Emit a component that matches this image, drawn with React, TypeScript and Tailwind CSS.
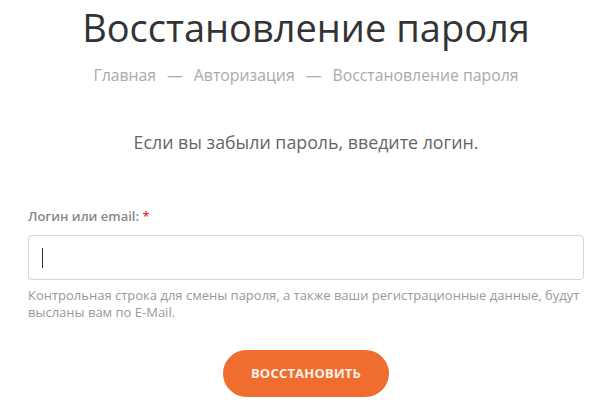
import React from 'react';

export default function App() {
  return (
    <div className="w-[600px] h-[409px] bg-white overflow-hidden font-['Open_Sans',sans-serif]">
      <div className="pl-[28px] pr-[16px]">
        <h1 className="text-center text-[38px] leading-[52px] text-[#333] font-normal pt-[1px]">
          Восстановление пароля
        </h1>
        <div className="mt-[12px] flex justify-center gap-[11px] text-[15.8px] leading-[20px] text-[#aaa]">
          <span>Главная</span>
          <span>—</span>
          <span>Авторизация</span>
          <span>—</span>
          <span>Восстановление пароля</span>
        </div>
        <p className="mt-[45px] text-center text-[17.8px] leading-[24px] text-[#666]">
          Если вы забыли пароль, введите логин.
        </p>

        <label className="block mt-[53px] text-[13px] leading-[18px] font-semibold text-[#888]">
          Логин или email: <span className="text-[#d33]">*</span>
        </label>
        <div className="mt-[10px] h-[45px] rounded-[4px] border border-[#d4d4d4] flex items-center pl-[13px]">
          <span className="w-[1px] h-[20px] bg-[#333]" />
        </div>
        <p className="mt-[7px] text-[13px] leading-[17px] text-[#999]">
          Контрольная строка для смены пароля, а также ваши регистрационные данные, будут высланы вам по E-Mail.
        </p>

        <div className="mt-[29px] flex justify-center">
          <button className="w-[166px] h-[47px] rounded-full bg-[#ef6d2f] text-[#fdf0e6] text-[13px] font-bold tracking-[0.2px]">
            ВОССТАНОВИТЬ
          </button>
        </div>
      </div>
    </div>
  );
}
